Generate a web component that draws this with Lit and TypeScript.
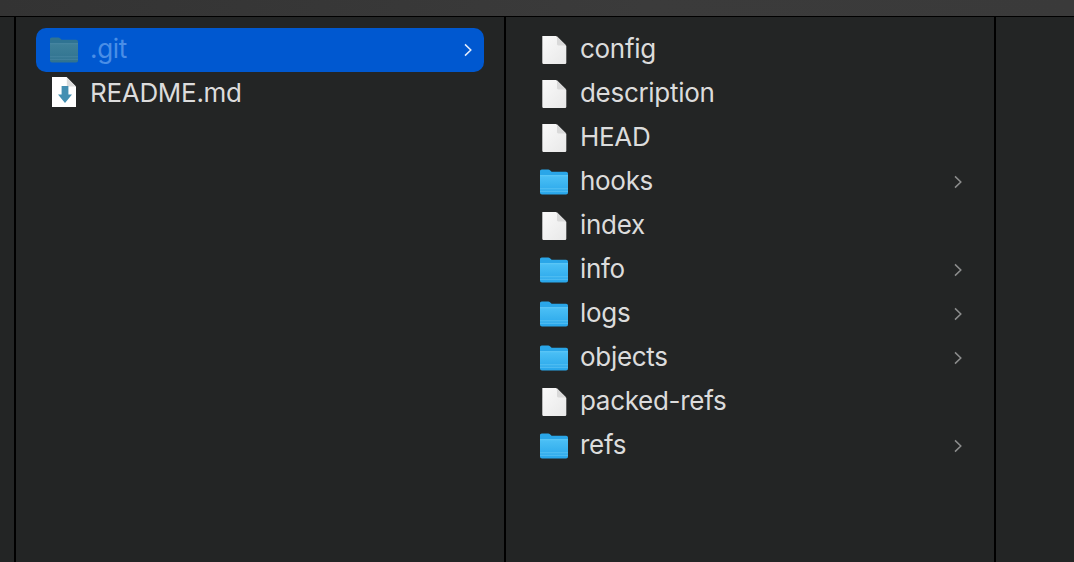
import { LitElement, html, css, svg } from "lit";
import { customElement } from "lit/decorators.js";

const folder = (dim: boolean, id: string) => svg`<svg class="ficon" width="30" height="28" viewBox="0 0 30 28">
  <defs><linearGradient id=${id} x1="0" y1="0" x2="0" y2="1">
    <stop offset="0" stop-color=${dim ? "#3f8099" : "#4cc0f5"}/>
    <stop offset="1" stop-color=${dim ? "#2f7290" : "#28a6ea"}/>
  </linearGradient></defs>
  <path d="M1 3.2C1 2.1 1.7 1.4 2.8 1.4H9.2C10 1.4 10.5 1.7 11 2.2L12.6 3.8H27C28.2 3.8 29 4.6 29 5.8V9H1Z" fill=${dim ? "#2f7392" : "#2aa6e8"}/>
  <path d="M1 7.4H29V24.4C29 25.6 28.2 26.4 27 26.4H3C1.8 26.4 1 25.6 1 24.4Z" fill="url(#${id})"/>
  <path d="M1 7.4H29V8.1H1Z" fill=${dim ? "#4f8ba8" : "#6fd0fa"}/>
  <path d="M1 20.8H29M1 23.3H29" stroke=${dim ? "#5a93ad" : "#7ed6fa"} stroke-width=".8" opacity=".6"/>
</svg>`;

const file = (id: string) => svg`<svg class="ficon" width="30" height="30" viewBox="0 0 30 30">
  <defs><linearGradient id=${id} x1="0" y1="0" x2="1" y2="1">
    <stop offset="0" stop-color="#fafafa"/>
    <stop offset="1" stop-color="#e8e8e8"/>
  </linearGradient></defs>
  <path d="M3.3 1H17.2L27.3 11V27.4C27.3 28.4 26.7 29 25.7 29H4.9C3.9 29 3.3 28.4 3.3 27.4Z" fill="url(#${id})"/>
  <path d="M18 1.2L27.3 10.4H19.4C18.5 10.4 18 9.9 18 9Z" fill="#d9d9d9"/>
</svg>`;

const mdFile = svg`<svg class="ficon" width="30" height="34" viewBox="0 0 30 34">
  <path d="M3 0H17.6L27 9.6V30H3Z" fill="#ffffff"/>
  <path d="M17.8 0.4L26.8 9.6H19.2C18.3 9.6 17.8 9.1 17.8 8.2Z" fill="#dcdcdc"/>
  <path d="M12.6 9H19.4V17.6H23L16 26L9 17.6H12.6Z" fill="#438fb2"/>
</svg>`;

const chevron = (sel: boolean) => svg`<svg class="chev" width="10" height="14" viewBox="0 0 10 14">
  <path d="M2 1.4L7.8 7L2 12.6" fill="none" stroke=${sel ? "#e4ecfa" : "#8c8d8d"} stroke-width="1.5"/>
</svg>`;

const col2: [string, boolean][] = [
  ["config", false], ["description", false], ["HEAD", false], ["hooks", true], ["index", false],
  ["info", true], ["logs", true], ["objects", true], ["packed-refs", false], ["refs", true],
];

@customElement("app-root")
export class AppRoot extends LitElement {
  static styles = css`
    :host { display: block; width: 1074px; height: 562px; overflow: hidden; background: #232525;
      font-family: Inter, "Liberation Sans", sans-serif; }
    .top { height: 16px; background: linear-gradient(90deg, #333 0%, #3b3b3b 60%, #3a3a3a 100%); border-bottom: 1px solid #000; }
    .cols { display: grid; grid-template-columns: 16px 490px 490px 1fr; height: 545px; }
    .col { border-right: 2px solid #000; box-sizing: border-box; padding-top: 11px; }
    .col.last { border-right: none; }
    .c1, .c2 { padding-left: 20px; padding-right: 20px; }
    .row { height: 44px; display: flex; align-items: center; border-radius: 10px; color: #dcdcdc; font-size: 26px; letter-spacing: -0.3px; padding-left: 13px; }
    .row.sel { background: #0058d0; color: #4a8ee6; }
    .slot { width: 30px; height: 30px; display: flex; align-items: center; justify-content: center; flex: none; }
    .name { margin: -4px 0 0 11px; white-space: nowrap; flex: 1; }
    .chev { flex: none; margin-right: 11px; }
    .c2 .row { padding-left: 13px; }
    .ficon { display: block; flex: none; }
  `;

  render() {
    return html`
      <div class="top"></div>
      <div class="cols">
        <div class="col"></div>
        <div class="col c1">
          <div class="row sel"><span class="slot">${folder(true, "f0")}</span><span class="name">.git</span>${chevron(true)}</div>
          <div class="row"><span class="slot">${mdFile}</span><span class="name">README.md</span></div>
        </div>
        <div class="col c2">
          ${col2.map(([n, isDir], i) => html`<div class="row"><span class="slot">${isDir ? folder(false, `f${i + 1}`) : file(`g${i + 1}`)}</span><span class="name">${n}</span>${isDir ? chevron(false) : ""}</div>`)}
        </div>
        <div class="col last"></div>
      </div>
    `;
  }
}
